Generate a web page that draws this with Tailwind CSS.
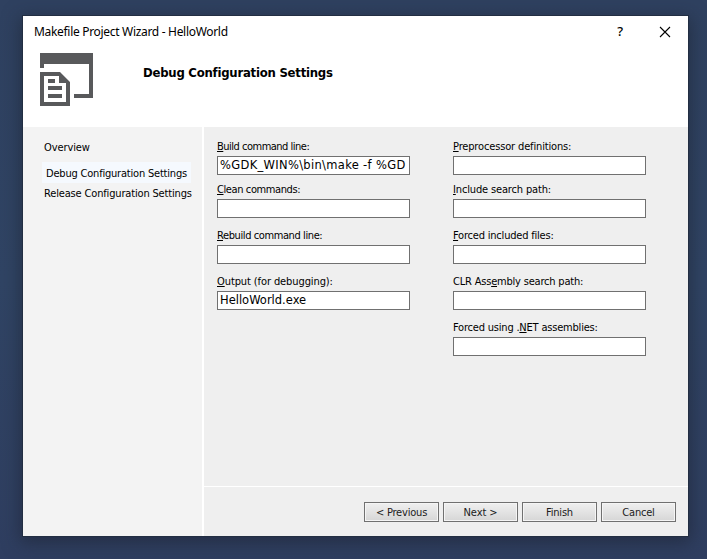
<!DOCTYPE html>
<html lang="en">
<head>
<meta charset="utf-8">
<title>Makefile Project Wizard - HelloWorld</title>
<script src="https://cdn.jsdelivr.net/npm/@tailwindcss/browser@4"></script>
</head>
<body class="h-[559px] w-[707px] overflow-hidden bg-linear-to-b from-[#2f4160] via-[#304464] to-[#2f3e60] pt-4 pl-[23px] font-['DejaVu_Sans_Condensed','DejaVu_Sans',sans-serif] text-[11px] leading-[13px] text-black">
<main class="flex h-[520px] w-[665px] flex-col bg-white shadow-[0_0_0_1px_#222e42,0_4px_16px_3px_rgba(25,32,44,0.5)]">
  <header class="h-[111px] shrink-0">
    <div class="flex h-[31px] items-center pl-[11px] font-['Noto_Sans',sans-serif] text-[12px]">
      <span class="whitespace-nowrap tracking-[-0.31px]">Makefile Project Wizard - HelloWorld</span>
      <span class="ml-auto mr-[36px] text-[13px] font-medium">?</span>
      <svg class="mr-[17px] h-[12px] w-[12px]" viewBox="0 0 12 12" fill="none" stroke="#000" stroke-width="1.1"><path d="M1 1L11 11M11 1L1 11"/></svg>
    </div>
    <div class="flex pl-[17px] pt-[6px]">
      <svg class="h-[53px] w-[53px]" viewBox="0 0 53 53" fill="#58595b"><path d="M0 0H53V45H34V41H49V11H4V15H0Z"/><path fill-rule="evenodd" d="M0 19H20L30 29V53H0ZM4 23V49H26V30H19V23Z"/><path d="M8 26H15V30H8ZM8 33H22V37H8ZM8 41H22V45H8Z"/></svg>
      <h1 class="ml-[50px] mt-[12px] whitespace-nowrap text-[13px] font-bold leading-[15px] tracking-[-0.24px]">Debug Configuration Settings</h1>
    </div>
  </header>
  <div class="flex flex-1">
    <nav class="flex w-[179px] flex-col bg-[#f3f3f3] pt-[14px] whitespace-nowrap">
      <a class="ml-[21px] tracking-[-0.1px]">Overview</a>
      <a class="ml-[19px] mt-[8px] h-[21px] w-[149px] bg-[#f5f9fe] pl-1 pt-[5px] tracking-[-0.2px]">Debug Configuration Settings</a>
      <a class="ml-[21px] mt-[4px] tracking-[-0.16px]">Release Configuration Settings</a>
    </nav>
    <section class="ml-[2px] flex w-[484px] flex-col bg-[#efefef]">
      <div class="flex h-[360px] gap-[43px] border-b border-white pl-[13px] pt-[13px] whitespace-nowrap">
        <div class="w-[193px]">
          <label class="block h-[43px]"><span class="block h-4 tracking-[-0.5px]"><u>B</u>uild command line:</span><span class="block h-[19px] overflow-hidden border border-[#707070] bg-white pl-[2px] font-['DejaVu_Sans',sans-serif] text-[11.5px] leading-[17px] tracking-[0.32px]">%GDK_WIN%\bin\make -f %GD</span></label>
          <label class="block h-[46px]"><span class="block h-4 tracking-[-0.4px]"><u>C</u>lean commands:</span><span class="block h-[19px] border border-[#707070] bg-white"></span></label>
          <label class="block h-[46px]"><span class="block h-4 tracking-[-0.4px]"><u>R</u>ebuild command line:</span><span class="block h-[19px] border border-[#707070] bg-white"></span></label>
          <label class="block h-[46px]"><span class="block h-4 tracking-[-0.1px]"><u>O</u>utput (for debugging):</span><span class="block h-[19px] border border-[#707070] bg-white pl-[2px] font-['DejaVu_Sans',sans-serif] text-[11.5px] leading-[17px]">HelloWorld.exe</span></label>
        </div>
        <div class="w-[193px]">
          <label class="block h-[43px]"><span class="block h-4 tracking-[-0.15px]"><u>P</u>reprocessor definitions:</span><span class="block h-[19px] border border-[#707070] bg-white"></span></label>
          <label class="block h-[46px]"><span class="block h-4 tracking-[-0.15px]"><u>I</u>nclude search path:</span><span class="block h-[19px] border border-[#707070] bg-white"></span></label>
          <label class="block h-[46px]"><span class="block h-4 tracking-[-0.2px]"><u>F</u>orced included files:</span><span class="block h-[19px] border border-[#707070] bg-white"></span></label>
          <label class="block h-[46px]"><span class="block h-4 tracking-[-0.2px]">CLR Ass<u>e</u>mbly search path:</span><span class="block h-[19px] border border-[#707070] bg-white"></span></label>
          <label class="block h-[46px]"><span class="block h-4 tracking-[-0.2px]">Forced using .<u>N</u>ET assemblies:</span><span class="block h-[19px] border border-[#707070] bg-white"></span></label>
        </div>
      </div>
      <div class="flex justify-end gap-1 pr-3 pt-[15px] whitespace-nowrap">
        <button class="h-5 w-[75px] border border-[#707070] bg-linear-to-b from-[#f0f0f0] to-[#d6d6d6] text-[#202020] tracking-[-0.2px] shadow-[inset_0_0_0_1px_#f5f5f5]">&lt; Previous</button>
        <button class="h-5 w-[75px] border border-[#707070] bg-linear-to-b from-[#f0f0f0] to-[#d6d6d6] text-[#202020] tracking-[-0.1px] shadow-[inset_0_0_0_1px_#f5f5f5]">Next &gt;</button>
        <button class="h-5 w-[75px] border border-[#707070] bg-linear-to-b from-[#f0f0f0] to-[#d6d6d6] text-[#202020] tracking-[-0.2px] shadow-[inset_0_0_0_1px_#f5f5f5]">Finish</button>
        <button class="h-5 w-[75px] border border-[#707070] bg-linear-to-b from-[#f0f0f0] to-[#d6d6d6] text-[#202020] tracking-[-0.2px] shadow-[inset_0_0_0_1px_#f5f5f5]">Cancel</button>
      </div>
    </section>
  </div>
</main>
</body>
</html>
